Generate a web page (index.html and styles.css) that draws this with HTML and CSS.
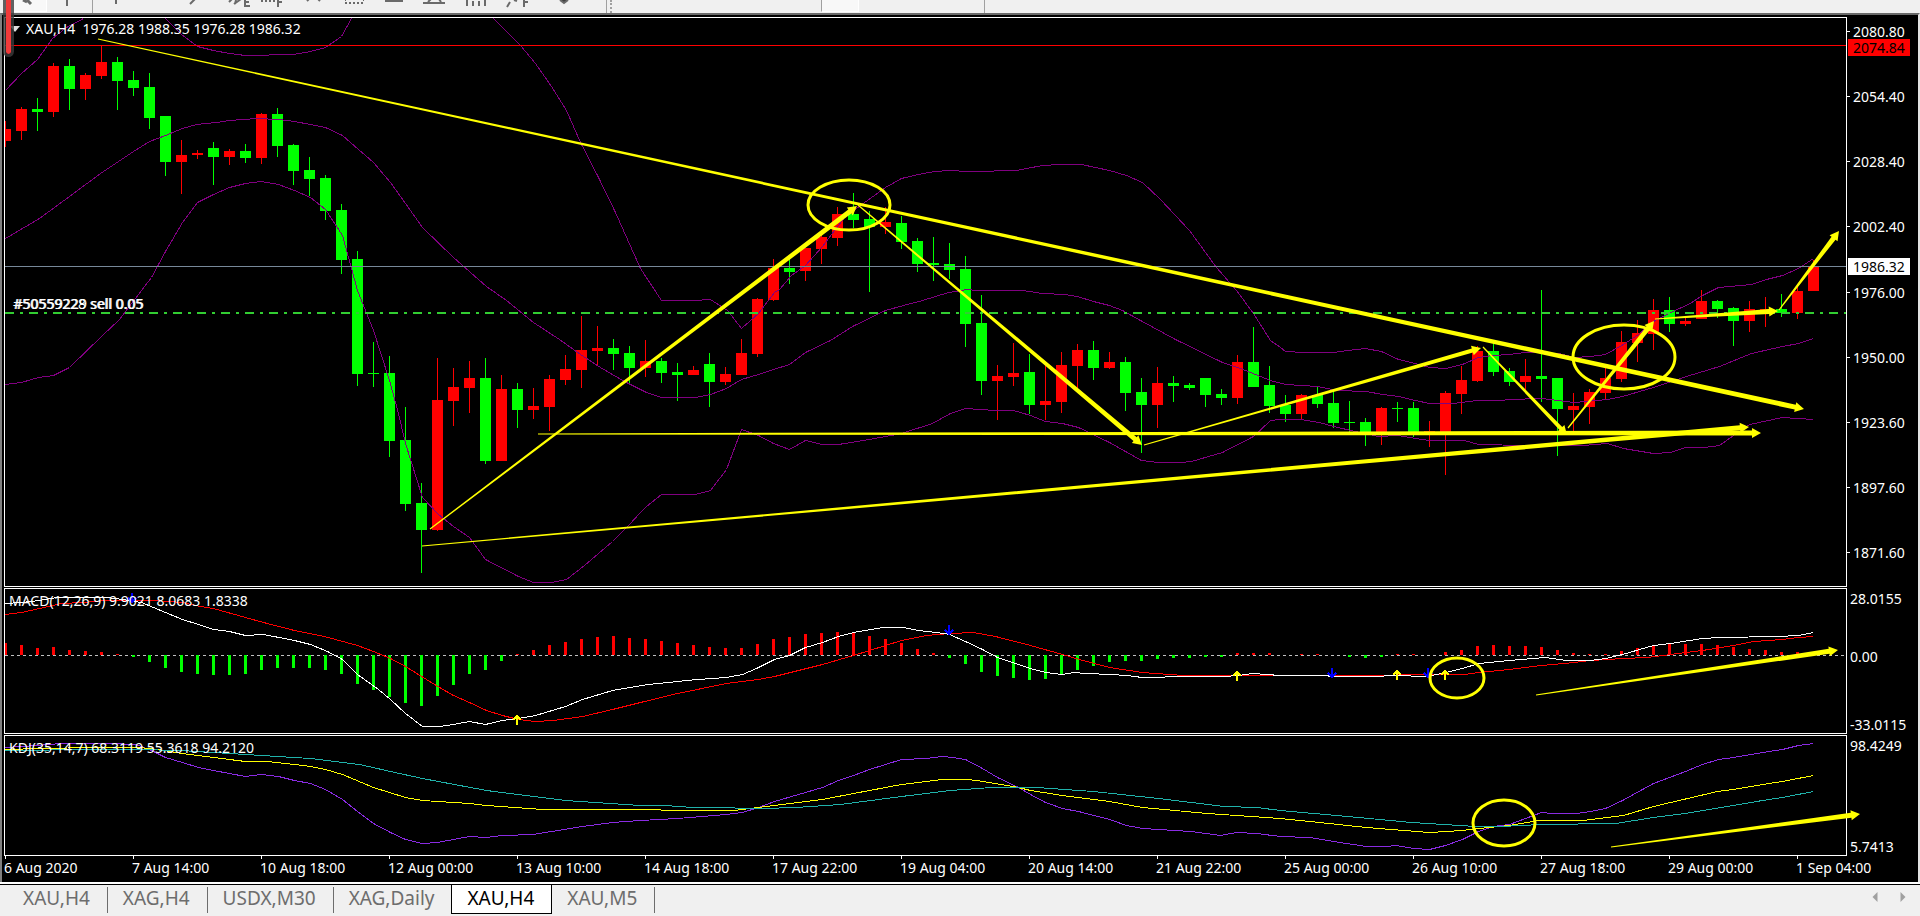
FILE: index.html
```html
<!DOCTYPE html>
<html lang="en">
<head>
  <meta charset="UTF-8" />
  <meta name="viewport" content="width=device-width, initial-scale=1.0"/>
  <title>XAU,H4</title>
  <link rel="stylesheet" href="styles.css">
</head>
<body>

  <!-- drawing tools -->
  <div class="toolbar">
    <button class="tool pressed" aria-label="Cursor"><svg viewBox="0 0 40 13"><path d="M16 0l4 2M20 0l4 4" class="thick"/></svg></button>
    <button class="tool" aria-label="Crosshair"><svg viewBox="0 0 40 13"><path d="M20 0v6"/></svg></button>
    <span class="divider"></span>
    <button class="tool" aria-label="Vertical line"><svg viewBox="0 0 40 13"><path d="M20 0v4"/></svg></button>
    <button class="tool" aria-label="Horizontal line"><svg viewBox="0 0 40 13"></svg></button>
    <button class="tool" aria-label="Trend line"><svg viewBox="0 0 40 13"><path d="M14 4l5-5"/></svg></button>
    <button class="tool" aria-label="Equidistant channel"><svg viewBox="0 0 40 13"><path d="M13 2l3-3M18 4l7-5M20 0l-1 4M29 0v6h5M29 2h4M29-1h5"/></svg></button>
    <button class="tool" aria-label="Fibonacci retracement"><svg viewBox="0 0 40 13"><path d="M5 1h2M9 1h2M13 1h2M17 1h2M22 0v7M22 2h4"/></svg></button>
    <button class="tool" aria-label="Zigzag"><svg viewBox="0 0 40 13"><path d="M11 1l3-3M21-2l3 3"/></svg></button>
    <button class="tool" aria-label="Rectangle"><svg viewBox="0 0 40 13"><path d="M9 3h19M9 0h1M27 0h1" stroke-dasharray="2 2"/></svg></button>
    <button class="tool" aria-label="Ellipse"><svg viewBox="0 0 40 13"><path d="M9 1h18"/></svg></button>
    <button class="tool" aria-label="Triangle"><svg viewBox="0 0 40 13"><path d="M7 3h22M12 2l3-3M23-1l2 3"/></svg></button>
    <button class="tool" aria-label="Cycle lines"><svg viewBox="0 0 40 13"><path d="M11 0v6M17 1v5M23 1v5M29 0v6"/></svg></button>
    <button class="tool" aria-label="Fibonacci fan"><svg viewBox="0 0 40 13"><path d="M11 7l3-5M18 0l3 1M28 0v7M28 2h4"/></svg></button>
    <button class="tool" aria-label="More objects"><svg viewBox="0 0 40 13"><path d="M24 0l4 3 4-3" class="solid"/></svg></button>
    <span class="divider double"></span>
    <span class="period pressed"></span>
    <span class="divider far"></span>
  </div>

  <div class="chart">
    <div class="panel">
      <svg class="plot" viewBox="5 18 1841 568" preserveAspectRatio="none">
        <g id="candles"></g>
        <g id="bands" transform="translate(.5 .5)"></g>
        <path class="line ask" d="M5 45.5H1846"/>
        <path class="line bid" d="M5 266.5H1846"/>
        <path class="line order" d="M5 313H1846"/>
      </svg>
      <svg class="drawings" id="draw-price" viewBox="5 18 1841 568" preserveAspectRatio="none">
        <ellipse cx="849" cy="205" rx="41" ry="25"/>
        <ellipse cx="1624" cy="357" rx="51" ry="32"/>
      </svg>
      <div class="caption">XAU,H4&nbsp; 1976.28 1988.35 1976.28 1986.32</div>
      <div class="order-label">#50559228 sell 0.05</div>
      <div class="order-label second" aria-hidden="true">#50559229 sell 0.05</div>
    </div>
    <div class="axis prices">
      <span>2080.80</span>
      <span>2054.40</span>
      <span>2028.40</span>
      <span>2002.40</span>
      <span>1976.00</span>
      <span>1950.00</span>
      <span>1923.60</span>
      <span>1897.60</span>
      <span>1871.60</span>
      <b class="tag red">2074.84</b>
      <b class="tag white">1986.32</b>
    </div>

    <div class="panel">
      <svg class="plot" viewBox="5 589 1841 144" preserveAspectRatio="none">
        <path class="line zero" d="M5 655.5H1846"/>
        <g id="histogram"></g>
        <g id="macd" transform="translate(.5 .5)"></g>
        <g id="signals"></g>
      </svg>
      <svg class="drawings" id="draw-macd" viewBox="5 589 1841 144" preserveAspectRatio="none">
        <ellipse cx="1457" cy="678" rx="27" ry="20"/>
      </svg>
      <div class="caption indicator">MACD(12,26,9) 9.9021 8.0683 1.8338</div>
    </div>
    <div class="axis macd-axis">
      <span>28.0155</span>
      <span>0.00</span>
      <span>-33.0115</span>
    </div>

    <div class="panel">
      <svg class="plot" viewBox="5 736 1841 119" preserveAspectRatio="none">
        <g id="kdj" transform="translate(.5 .5)"></g>
      </svg>
      <svg class="drawings" id="draw-kdj" viewBox="5 736 1841 119" preserveAspectRatio="none">
        <ellipse cx="1504" cy="823" rx="31" ry="23"/>
      </svg>
      <div class="caption indicator">KDJ(35,14,7) 68.3119 55.3618 94.2120</div>
    </div>
    <div class="axis kdj-axis">
      <span>98.4249</span>
      <span>5.7413</span>
    </div>

    <div class="dates">
      <span>6 Aug 2020</span>
      <span>7 Aug 14:00</span>
      <span>10 Aug 18:00</span>
      <span>12 Aug 00:00</span>
      <span>13 Aug 10:00</span>
      <span>14 Aug 18:00</span>
      <span>17 Aug 22:00</span>
      <span>19 Aug 04:00</span>
      <span>20 Aug 14:00</span>
      <span>21 Aug 22:00</span>
      <span>25 Aug 00:00</span>
      <span>26 Aug 10:00</span>
      <span>27 Aug 18:00</span>
      <span>29 Aug 00:00</span>
      <span>1 Sep 04:00</span>
    </div>
  </div>

  <nav class="tabs">
    <a href="#">XAU,H4</a>
    <a href="#">XAG,H4</a>
    <a href="#">USDX,M30</a>
    <a href="#">XAG,Daily</a>
    <a href="#" class="active">XAU,H4</a>
    <a href="#">XAU,M5</a>
    <span class="scroll">
      <button aria-label="Scroll left"><svg viewBox="0 0 6 12"><path d="M6 0v12L0 6z"/></svg></button>
      <button aria-label="Scroll right"><svg viewBox="0 0 6 12"><path d="M0 0v12l6-6z"/></svg></button>
    </span>
  </nav>

  <div class="marker"></div>

  <script src="chart.js"></script>
</body>
</html>
```

FILE: styles.css
```css
* {
  box-sizing: border-box;
}

body {
  margin: 0;
  height: 100vh;
  display: flex;
  flex-direction: column;
  overflow: hidden;
  background-color: #f0f0f0;
  font-family: "Noto Sans", "Open Sans", sans-serif;
  font-size: 14px;
  line-height: 18px;
}

button {
  padding: 0;
  border: 0;
  background: none;
}

/* toolbar */
.toolbar {
  display: flex;
  height: 13px;
  padding-left: 7px;
  overflow: hidden;
}

.tool {
  flex: none;
  width: 40px;
  height: 13px;
}

.tool svg {
  display: block;
  width: 40px;
  height: 13px;
  fill: none;
  stroke: #6a6a6a;
  stroke-width: 2;
}

.tool .thick {
  stroke-width: 3;
}

.tool .solid {
  fill: #404040;
}

.pressed {
  height: 12px;
  background-color: #f8f8f8;
  border-right: 1px solid #fff;
  border-bottom: 1px solid #fff;
}

.divider {
  flex: none;
  width: 9px;
  border-left: 1px solid #a0a0a0;
  margin-left: 5px;
  margin-right: -5px;
}

.divider.double {
  width: 6px;
  margin: 0 0 0 30px;
  border-right: 2px dotted #a0a0a0;
}

.period {
  width: 38px;
  margin-left: 209px;
  border-left: 1px solid #a0a0a0;
}

.divider.far {
  margin: 0 0 0 125px;
}

/* chart window */
.chart {
  flex: 1;
  min-height: 0;
  display: grid;
  grid-template-columns: minmax(0, 1fr) 71px;
  grid-template-rows: minmax(0, 570fr) minmax(0, 146fr) minmax(0, 121fr) 25px;
  row-gap: 1px;
  padding: 2px 0 0 2px;
  background-color: #000;
  border-top: 2px solid #696969;
  border-left: 2px solid #808080;
  border-right: 2px solid #e3e3e3;
  color: #fff;
}

.panel {
  position: relative;
  border: 1px solid #fff;
}

.plot,
.drawings {
  position: absolute;
  top: 0;
  left: 0;
  width: 100%;
  height: 100%;
}

.drawings {
  z-index: 2;
  overflow: visible;
  fill: #ff0;
}

.drawings ellipse {
  fill: none;
  stroke: #ff0;
  stroke-width: 3;
}

.caption {
  position: absolute;
  top: 2px;
  left: 21px;
  white-space: nowrap;
}

.caption::before {
  content: "";
  position: absolute;
  left: -16px;
  top: 6px;
  border: 5px solid transparent;
  border-top: 6px solid #e0e0e0;
  border-bottom: 0;
}

.caption.indicator {
  top: 3px;
  left: 4px;
}

.caption.indicator::before {
  display: none;
}

.order-label {
  position: absolute;
  top: 48.7%;
  left: 8px;
  white-space: nowrap;
}

.order-label.second {
  left: 9px;
}

/* series */
.plot {
  shape-rendering: crispEdges;
}

.up {
  fill: #f00;
}

.down {
  fill: #0f0;
}

.line {
  fill: none;
  stroke-width: 1;
}

.ask,
.signal {
  stroke: #f00;
}

.bid {
  stroke: #778899;
}

.order {
  stroke: #32cd32;
  stroke-width: 2;
  stroke-dasharray: 9 6 3 6;
}

.zero {
  stroke: #c0c0c0;
  stroke-dasharray: 3 3;
}

.band {
  stroke: #800080;
}

.main {
  stroke: #fff;
}

.j {
  stroke: #8a2be2;
}

.k {
  stroke: #ff0;
}

.d {
  stroke: #20b2aa;
}

.buy,
.sell {
  fill: none;
  stroke: #ff0;
  stroke-width: 2;
}

.sell {
  stroke: #00f;
}

/* axes */
.axis {
  position: relative;
  display: flex;
  flex-direction: column;
  justify-content: space-between;
  padding-left: 3px;
}

.prices {
  padding: 6px 0 25px 6px;
}

.prices span {
  position: relative;
}

.prices span::before {
  content: "";
  position: absolute;
  left: -6px;
  top: 8px;
  width: 3px;
  height: 1px;
  background-color: #fff;
}

.tag {
  position: absolute;
  left: 1px;
  width: 62px;
  padding-left: 5px;
  font-weight: normal;
  line-height: 17px;
  color: #000;
}

.tag.red {
  top: 3.8%;
  background-color: #f00;
}

.tag.white {
  top: 42.3%;
  background-color: #fff;
}

.macd-axis {
  padding-top: 2px;
}

.macd-axis span:nth-child(2) {
  margin-bottom: 10px;
}

.kdj-axis {
  padding-top: 2px;
}

.dates {
  grid-column: 1 / 3;
  margin-top: -1px;
  display: flex;
}

.dates span {
  position: relative;
  flex: 0 0 6.688%;
  padding-top: 3px;
  white-space: nowrap;
}

.dates span::before {
  content: "";
  position: absolute;
  left: 1px;
  top: 0;
  width: 1px;
  height: 3px;
  background-color: #fff;
}

/* chart tabs */
.tabs {
  display: flex;
  height: 34px;
  padding-left: 1px;
  border-top: 2px solid #fff;
  box-shadow: inset 0 1px #000;
  font-size: 19px;
  line-height: 23px;
}

.tabs a {
  height: 26px;
  margin-top: 3px;
  padding: 0 17px 0 15px;
  border-right: 1px solid #6d6d6d;
  color: #6d6d6d;
  text-decoration: none;
}

.tabs a:first-child {
  padding-left: 22px;
}

.tabs a.active {
  height: 29px;
  margin: 1px 0 0 -1px;
  padding-top: 2px;
  background-color: #fff;
  border: 1px solid #000;
  border-top: 0;
  color: #000;
}

.scroll {
  display: flex;
  gap: 22px;
  margin-left: auto;
  padding-right: 14px;
}

.scroll svg {
  display: block;
  width: 6px;
  height: 10px;
  margin-bottom: 6px;
  fill: #a0a0a0;
}

/* red pen mark over the window corner */
.marker {
  position: absolute;
  top: 0;
  left: 3px;
  width: 11px;
  height: 57px;
  border: 3px solid rgba(60, 60, 60, 0.8);
  border-top: 0;
  border-radius: 0 0 6px 6px;
  background-color: #f03a3a;
  background-clip: padding-box;
}
```

FILE: chart.js
```js
const NS = "http://www.w3.org/2000/svg";
const STEP = 16;
const X0 = 5;

function add(parent, tag, attrs) {
  const el = document.createElementNS(NS, tag);
  for (const key in attrs) el.setAttribute(key, attrs[key]);
  document.getElementById(parent).appendChild(el);
}

// direction, body top, body bottom, high, low
const candles = `r129,141,121,147 r109,131,107,140 g109,112,98,131 r66,112,63,117 g66,89,59,110 r75,89,73,100
r62,76,46,79 g62,81,57,110 g80,88,71,96 g87,118,73,129 g116,162,116,176 r155,162,140,194 r153,155,150,159
g148,157,142,185 r151,157,149,165 g151,158,144,163 r114,158,113,164 g114,146,108,157 g145,171,144,185
g170,179,157,196 g178,211,175,220 g210,260,204,274 g259,374,251,386 g373,374,342,387 g373,441,356,457
g440,504,407,511 g503,530,483,573 r400,530,358,531 r387,401,368,426 r378,388,361,413 g378,461,358,464
r389,461,375,461 g389,410,383,428 r406,410,388,419 r379,407,375,431 r369,380,355,385 r350,370,316,388
r348,351,326,366 g348,354,339,370 g353,368,346,384 r361,368,340,377 g361,373,358,383 g372,375,363,401
r370,375,366,375 g364,382,353,407 r374,382,367,385 r353,375,339,375 r299,354,298,357 r268,300,259,301
g268,272,259,284 r248,271,248,281 r237,249,234,264 r214,238,207,246 g214,220,193,228 g219,227,211,292
r222,227,207,234 g223,242,216,249 g241,264,238,272 g263,265,237,281 g264,270,243,279 g269,324,256,347
g323,381,295,395 r376,381,365,420 r373,377,343,386 g372,405,354,414 r401,405,364,420 r365,402,352,413
r350,366,344,390 g350,368,341,380 r362,368,352,369 g362,393,357,411 g392,405,378,453 r383,405,367,428
g383,386,376,402 g385,388,383,390 g378,395,378,407 g394,398,389,405 r362,398,355,404 g362,387,327,387
g385,406,366,413 g405,414,395,422 r395,414,394,419 g395,404,387,408 g403,423,391,428 g422,423,401,433
g422,433,418,446 r408,433,407,445 g408,409,402,422 g408,433,402,437 r431,432,421,447 r393,433,391,475
r380,394,366,414 r351,381,346,382 g351,372,343,376 g371,382,368,386 r376,382,359,390 g376,379,290,402
g378,409,378,456 r406,410,393,433 r392,407,389,424 r378,393,368,399 r342,379,331,382 r333,343,320,362
r310,334,299,350 g310,324,297,332 r321,324,318,326 r301,319,290,319 g301,309,300,318 g308,321,307,346
r309,321,301,332 r309,311,297,327 g309,313,294,317 r291,313,286,319 r266,291,260,291`.split(/\s+/);

candles.forEach((c, i) => {
  const [top, bottom, high, low] = c.slice(1).split(",").map(Number);
  const x = X0 + i * STEP;
  const cls = c[0] === "r" ? "up" : "down";
  add("candles", "rect", { class: cls, x: x, y: high, width: 1, height: low - high });
  add("candles", "rect", { class: cls, x: x - 5, y: top, width: 11, height: bottom - top });
});

function line(parent, cls, points) {
  add(parent, "polyline", { class: "line " + cls, points: points });
}

// Bollinger bands
line("bands", "band", "5,90 21,73 37,59 52,38 66,27 83,18");
line("bands", "band", "165,18 181,34 197,46 213,50 229,53 245,55 293,54 310,51 325,47 341,36 351,18");
line("bands", "band", `493,18 508,33 520,45 535,63 551,86 566,110 580,142 598,177 615,212 631,248 640,268 661,300 693,300
710,299 727,310 741,328 758,313 774,292 779,289 791,275 805,265 822,246 844,217 860,205 885,187 901,178 918,174 934,171
950,170 966,171 989,171 999,170 1016,170 1026,168 1042,165 1060,164 1081,164 1095,167 1109,170 1126,175 1142,182
1160,199 1189,230 1216,267 1236,290 1253,313 1270,340 1280,347 1285,351 1304,352 1333,352 1347,350 1365,348 1381,351
1398,359 1415,363 1429,367 1445,368 1462,364 1478,357 1492,355 1509,354 1525,352 1558,353 1574,357 1590,356 1605,354
1623,344 1638,334 1653,321 1670,312 1688,304 1702,295 1718,287 1751,284 1766,279 1782,275 1798,268 1813,258`);
line("bands", "band", `5,238 39,218 69,196 100,173 133,151 149,141 165,135 182,128 196,124 216,122 229,120 257,118 278,119
294,121 310,124 325,127 342,135 373,162 390,182 405,203 422,227 453,257 486,286 506,300 533,322 559,339 580,354 600,367
624,381 640,389 646,392 661,397 695,397 710,394 726,388 741,379 758,374 773,369 789,364 805,352 830,340 852,326 885,310
903,305 922,300 948,292 967,289 975,290 1022,290 1042,293 1064,294 1077,296 1093,301 1109,305 1122,310 1140,320
1175,339 1222,362 1240,368 1270,380 1285,384 1317,386 1337,390 1366,391 1382,394 1398,396 1415,400 1429,403 1453,403
1476,400 1500,400 1509,399 1541,398 1574,402 1607,399 1622,396 1653,387 1686,376 1719,366 1751,353 1782,346 1798,343
1813,338`);
line("bands", "band", `5,384 21,382 38,377 53,375 69,367 102,335 119,319 141,290 151,277 165,251 182,222 197,202 213,194
229,187 245,183 261,181 278,184 294,190 310,197 325,209 342,235 357,290 373,330 389,380 398,413 405,443 422,497 438,514
453,526 469,537 485,559 518,576 533,582 551,582 566,579 584,565 612,541 629,524 640,512 646,506 661,494 695,494 710,490
726,469 741,429 758,435 773,443 789,449 805,440 822,444 838,444 869,439 901,433 932,423 950,413 965,408 995,410
1013,410 1030,415 1045,421 1062,423 1078,427 1109,442 1141,460 1158,462 1181,462 1191,461 1222,452 1253,436 1270,420
1280,419 1300,419 1319,422 1333,426 1355,431 1378,436 1398,435 1415,438 1429,440 1464,440 1478,444 1525,445 1582,445
1607,443 1623,448 1653,453 1670,452 1685,447 1704,447 1719,445 1733,435 1749,424 1782,417 1813,419`);

// MACD histogram, positive values are drawn upwards
const histogram = [12, 10, 7, 8, 5, 4, 3, 1, -2, -7, -13, -17, -19, -20, -20, -19, -15, -13, -13, -13, -15, -19, -29,
  -35, -42, -48, -51, -41, -30, -19, -15, -6, 1, 5, 10, 13, 16, 18, 19, 17, 16, 14, 12, 10, 8, 7, 7, 11, 16, 18, 21,
  22, 23, 22, 19, 16, 12, 6, 2, -3, -9, -17, -21, -23, -25, -24, -20, -15, -11, -7, -6, -6, -4, -3, -3, -2, -2, 2, 2,
  2, 0, 1, 1, 0, -2, -3, -2, 1, 1, 0, 3, 5, 9, 10, 9, 9, 8, 5, 2, 1, 1, 4, 7, 10, 11, 11, 11, 10, 8, 6, 5, 3, 3, 2];

histogram.forEach((v, i) => {
  add("histogram", "rect", {
    class: v > 0 ? "up" : "down",
    x: X0 + i * STEP - 1,
    y: v > 0 ? 655 - v : 655,
    width: 3,
    height: Math.abs(v)
  });
});

line("macd", "signal", `5,614 21,612 39,608 61,603 82,602 106,600 155,600 182,602 200,606 213,608 245,617 263,622 294,630
324,636 357,645 373,651 390,658 405,666 439,687 453,695 469,702 486,710 502,715 518,719 535,721 553,720 582,716 612,709
640,702 677,693 726,683 758,679 774,676 822,664 853,655 885,645 901,640 926,635 950,633 973,632 995,636 1030,645
1062,654 1079,659 1109,667 1142,672 1183,675 1280,675 1329,675 1464,674 1478,672 1509,669 1541,665 1574,662 1590,660
1623,658 1647,657 1670,654 1702,650 1733,645 1753,641 1782,639 1798,637 1813,636`);
line("macd", "main", `5,603 21,602 39,600 57,597 92,597 106,597 122,599 141,602 165,612 182,619 198,624 213,629 229,631
245,635 263,634 294,640 310,644 327,651 342,659 357,674 378,689 390,699 405,713 422,726 439,726 453,724 469,721 485,724
502,720 518,718 535,715 565,706 582,699 612,690 648,684 677,681 697,679 726,677 742,674 756,668 774,659 789,655 805,647
822,642 838,636 853,632 883,627 903,627 918,630 944,633 949,634 965,641 982,649 997,657 1030,668 1045,672 1062,674
1073,672 1085,673 1111,674 1126,675 1142,677 1162,677 1167,676 1224,676 1238,675 1252,673 1280,675 1325,675 1331,676
1374,676 1394,675 1427,676 1445,672 1462,668 1478,663 1509,660 1545,657 1566,660 1590,660 1605,658 1622,654 1653,645
1670,643 1702,638 1719,637 1778,636 1798,635 1813,632`);

[[517, 720], [1237, 676], [1397, 675], [1445, 675]].forEach(([x, y]) => {
  add("signals", "path", { class: "buy", d: `M${x} ${y + 5}v-10M${x - 4} ${y}l4-4 4 4` });
});
[[132, 598], [949, 630], [1332, 673], [1428, 673]].forEach(([x, y]) => {
  add("signals", "path", { class: "sell", d: `M${x} ${y - 5}v10M${x - 4} ${y}l4 4 4-4` });
});

// KDJ
line("kdj", "j", `5,747 37,745 61,743 82,743 108,743 135,744 149,749 165,757 182,762 198,767 213,770 229,773 245,776
261,774 278,776 294,780 310,783 325,789 342,799 357,811 373,823 390,832 405,839 422,843 437,842 453,839 469,836 486,837
502,835 533,834 551,831 582,826 612,822 640,820 677,818 726,814 742,812 758,807 774,801 805,792 822,787 838,780 853,775
869,769 885,764 901,759 926,758 942,756 952,757 965,759 982,768 997,777 1018,787 1030,794 1045,802 1062,808 1078,811
1109,819 1126,825 1142,828 1158,829 1191,831 1220,835 1236,832 1256,833 1280,836 1309,837 1333,841 1366,846 1386,846
1396,845 1413,848 1429,849 1445,845 1462,839 1478,831 1493,826 1509,824 1525,818 1541,812 1551,813 1576,813 1590,811
1605,808 1622,800 1653,783 1685,771 1702,764 1718,759 1733,757 1762,752 1782,749 1798,745 1813,743`);
line("kdj", "k", `5,749 41,748 94,747 139,747 157,749 182,753 213,757 245,761 267,761 294,764 310,766 325,769 342,774
373,787 405,797 422,800 469,803 486,805 543,809 640,809 681,810 734,810 758,807 789,803 822,799 853,793 901,784 942,779
967,779 983,781 1018,787 1030,790 1062,795 1109,801 1142,807 1207,813 1280,818 1319,822 1366,827 1429,832 1462,830
1478,828 1509,825 1539,820 1582,820 1607,817 1623,815 1653,806 1717,791 1733,789 1762,784 1782,781 1813,775`);
line("kdj", "d", `5,750 94,749 135,749 180,750 213,752 261,755 310,758 359,764 390,771 422,778 486,790 565,800 640,805
664,805 693,807 730,807 738,808 762,808 795,807 840,804 901,796 950,790 991,787 1036,787 1093,791 1158,798 1224,806
1256,807 1280,810 1358,817 1411,822 1476,826 1500,826 1541,824 1566,824 1590,823 1615,823 1653,817 1685,813 1762,800
1782,797 1813,791`);

// arrows get wider from tail to head
function arrow(parent, x1, y1, x2, y2, w) {
  const len = Math.hypot(x2 - x1, y2 - y1);
  const ux = (x2 - x1) / len;
  const uy = (y2 - y1) / len;
  const at = (d, s) => `${x1 + ux * d - uy * s},${y1 + uy * d + ux * s}`;
  const neck = len - 9;
  add(parent, "polygon", {
    points: [at(0, -0.6), at(neck, -w / 2), at(neck, -5), at(len, 0), at(neck, 5), at(neck, w / 2), at(0, 0.6)].join(" ")
  });
}

arrow("draw-price", 98, 39, 1804, 409, 5);
arrow("draw-price", 430, 529, 857, 206, 5);
arrow("draw-price", 858, 205, 1142, 445, 5);
arrow("draw-price", 1144, 445, 1481, 348, 4);
arrow("draw-price", 1483, 347, 1567, 435, 4);
arrow("draw-price", 1568, 428, 1654, 321, 5);
arrow("draw-price", 1655, 319, 1778, 311, 5);
arrow("draw-price", 1779, 310, 1839, 231, 5);
arrow("draw-price", 538, 434, 1761, 433, 5);
arrow("draw-price", 422, 546, 1749, 427, 5);
arrow("draw-macd", 1536, 695, 1838, 650, 5);
arrow("draw-kdj", 1611, 847, 1860, 814, 5);
```
